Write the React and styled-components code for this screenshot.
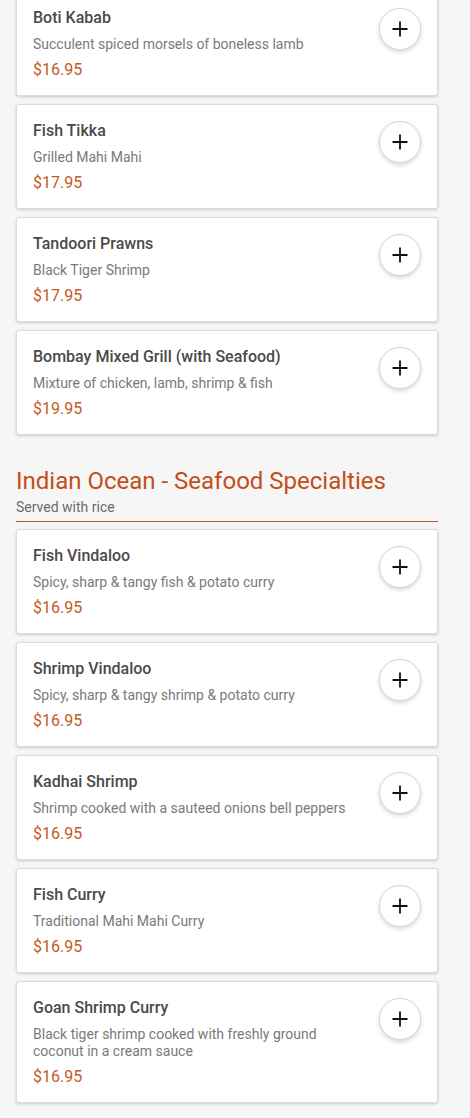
import styled, { createGlobalStyle } from "styled-components";

const grills = [
  { name: "Boti Kabab", desc: "Succulent spiced morsels of boneless lamb", price: "$16.95" },
  { name: "Fish Tikka", desc: "Grilled Mahi Mahi", price: "$17.95" },
  { name: "Tandoori Prawns", desc: "Black Tiger Shrimp", price: "$17.95" },
  { name: "Bombay Mixed Grill (with Seafood)", desc: "Mixture of chicken, lamb, shrimp & fish", price: "$19.95" },
];

const seafood = [
  { name: "Fish Vindaloo", desc: "Spicy, sharp & tangy fish & potato curry", price: "$16.95" },
  { name: "Shrimp Vindaloo", desc: "Spicy, sharp & tangy shrimp & potato curry", price: "$16.95" },
  { name: "Kadhai Shrimp", desc: "Shrimp cooked with a sauteed onions bell peppers", price: "$16.95" },
  { name: "Fish Curry", desc: "Traditional Mahi Mahi Curry", price: "$16.95" },
  {
    name: "Goan Shrimp Curry",
    desc: "Black tiger shrimp cooked with freshly ground coconut in a cream sauce",
    price: "$16.95",
  },
];

export default function App() {
  return (
    <>
      <GlobalStyle />
      <Page>
        <List>
          {grills.map((item) => (
            <MenuItem key={item.name} item={item} />
          ))}
        </List>
        <Section>
          <SectionTitle>Indian Ocean - Seafood Specialties</SectionTitle>
          <SectionNote>Served with rice</SectionNote>
        </Section>
        <List>
          {seafood.map((item) => (
            <MenuItem key={item.name} item={item} />
          ))}
        </List>
      </Page>
    </>
  );
}

function MenuItem({ item }) {
  return (
    <Card>
      <Info>
        <Name>{item.name}</Name>
        <Desc>{item.desc}</Desc>
        <Price>{item.price}</Price>
      </Info>
      <AddButton aria-label={`Add ${item.name}`}>
        <svg width="18" height="18" viewBox="0 0 18 18">
          <path d="M9 1.5v15M1.5 9h15" stroke="#111" strokeWidth="1.8" fill="none" />
        </svg>
      </AddButton>
    </Card>
  );
}

const GlobalStyle = createGlobalStyle`
  * { box-sizing: border-box; }
  body {
    margin: 0;
    background: #f6f6f6;
    font-family: Roboto, "Liberation Sans", sans-serif;
  }
`;

const Page = styled.div`
  width: 422px;
  margin: -9px 0 0 16px;
  padding-bottom: 16px;
`;

const List = styled.div`
  display: flex;
  flex-direction: column;
  gap: 8px;
`;

const Card = styled.div`
  display: flex;
  align-items: flex-start;
  gap: 16px;
  background: #fff;
  border: 1px solid #dcdcdc;
  border-radius: 3px;
  box-shadow: 0 1px 3px rgba(0, 0, 0, 0.18);
  padding: 16px 16px 15px;
`;

const Info = styled.div`
  flex: 1;
  min-width: 0;
  padding-right: 10px;
`;

const Name = styled.div`
  font-size: 16px;
  line-height: 20px;
  font-weight: 500;
  color: #4a4a4a;
  margin-bottom: 8px;
`;

const Desc = styled.div`
  font-size: 14px;
  line-height: 17px;
  color: #7a7a7a;
  margin-bottom: 7px;
`;

const Price = styled.div`
  font-size: 16px;
  line-height: 20px;
  color: #c45a24;
`;

const AddButton = styled.button`
  flex: none;
  display: flex;
  align-items: center;
  justify-content: center;
  width: 42px;
  height: 42px;
  padding: 0;
  border-radius: 50%;
  border: 1px solid #d6d6d6;
  background: #fff;
  box-shadow: 0 2px 4px rgba(0, 0, 0, 0.16);
  cursor: pointer;
`;

const Section = styled.div`
  margin: 32px 0 7px;
  padding-bottom: 5px;
  border-bottom: 1px solid #c0561f;
`;

const SectionTitle = styled.h2`
  margin: 0 0 4px;
  font-size: 24px;
  line-height: 28px;
  font-weight: 400;
  color: #c24f1a;
`;

const SectionNote = styled.div`
  font-size: 14px;
  line-height: 17px;
  color: #6a6a6a;
`;
